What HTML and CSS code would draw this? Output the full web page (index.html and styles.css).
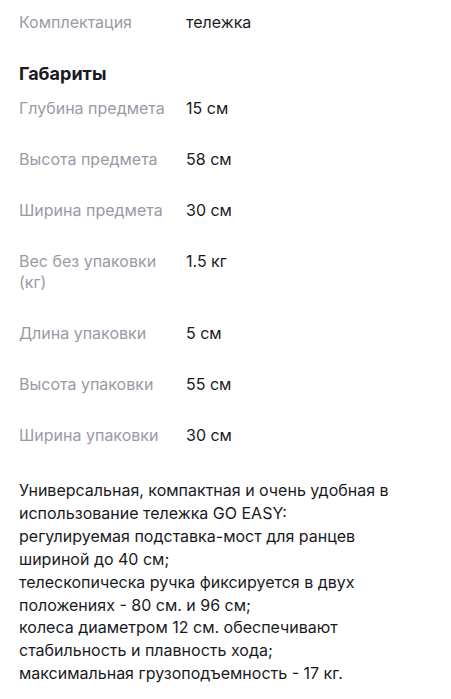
FILE: index.html
```html
<!DOCTYPE html>
<html lang="ru">
<head>
    <meta charset="UTF-8">
    <meta name="viewport" content="width=device-width, initial-scale=1.0">
    <title>Характеристики</title>
    <link rel="stylesheet" href="styles.css">
</head>
<body>
    <div id="container">
        <dl class="specs">
            <dt>Комплектация</dt>
            <dd>тележка</dd>
        </dl>
        <h2 class="section-title">Габариты</h2>
        <dl class="specs">
            <dt>Глубина предмета</dt>
            <dd>15 см</dd>
            <dt>Высота предмета</dt>
            <dd>58 см</dd>
            <dt>Ширина предмета</dt>
            <dd>30 см</dd>
            <dt>Вес без упаковки (кг)</dt>
            <dd>1.5 кг</dd>
            <dt>Длина упаковки</dt>
            <dd>5 см</dd>
            <dt>Высота упаковки</dt>
            <dd>55 см</dd>
            <dt>Ширина упаковки</dt>
            <dd>30 см</dd>
        </dl>
        <p class="description">
            Универсальная, компактная и очень удобная в использование тележка GO EASY:<br>
            регулируемая подставка-мост для ранцев шириной до 40 см;<br>
            телескопическа ручка фиксируется в двух положениях - 80 см. и 96 см;<br>
            колеса диаметром 12 см. обеспечивают стабильность и плавность хода;<br>
            максимальная грузоподъемность - 17 кг.
        </p>
    </div>
</body>
</html>
```

FILE: styles.css
```css
body{
    margin: 0;
    background: #fff;
    font-family: Inter, "Noto Sans", sans-serif;
    color: #1a1a1e;
}
#container{
    padding: 12px 30px 0 19px;
}
.specs{
    display: grid;
    grid-template-columns: 160px 1fr;
    column-gap: 7px;
    row-gap: 30px;
    margin: 0;
    font-size: 16px; line-height: 21px;
}
.specs dt{
    color: #9b99a6;
}
.specs dd{
    margin: 0;
}
.section-title{
    margin: 27px 0 10px;
    font-size: 18px; line-height: 28px; font-weight: 700;
}
.description{
    margin: 33px 0 0;
    font-size: 16px; line-height: 22.9px;
}
```
